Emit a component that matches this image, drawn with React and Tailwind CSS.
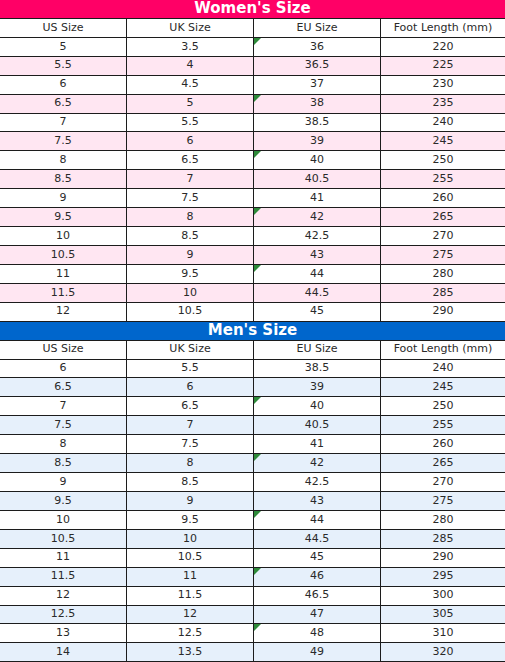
const women = [
  ["5", "3.5", "36", "220"],
  ["5.5", "4", "36.5", "225"],
  ["6", "4.5", "37", "230"],
  ["6.5", "5", "38", "235"],
  ["7", "5.5", "38.5", "240"],
  ["7.5", "6", "39", "245"],
  ["8", "6.5", "40", "250"],
  ["8.5", "7", "40.5", "255"],
  ["9", "7.5", "41", "260"],
  ["9.5", "8", "42", "265"],
  ["10", "8.5", "42.5", "270"],
  ["10.5", "9", "43", "275"],
  ["11", "9.5", "44", "280"],
  ["11.5", "10", "44.5", "285"],
  ["12", "10.5", "45", "290"],
];

const men = [
  ["6", "5.5", "38.5", "240"],
  ["6.5", "6", "39", "245"],
  ["7", "6.5", "40", "250"],
  ["7.5", "7", "40.5", "255"],
  ["8", "7.5", "41", "260"],
  ["8.5", "8", "42", "265"],
  ["9", "8.5", "42.5", "270"],
  ["9.5", "9", "43", "275"],
  ["10", "9.5", "44", "280"],
  ["10.5", "10", "44.5", "285"],
  ["11", "10.5", "45", "290"],
  ["11.5", "11", "46", "295"],
  ["12", "11.5", "46.5", "300"],
  ["12.5", "12", "47", "305"],
  ["13", "12.5", "48", "310"],
  ["14", "13.5", "49", "320"],
];

const headers = ["US Size", "UK Size", "EU Size", "Foot Length (mm)"];

function Row({ cells, bg, flag }) {
  return (
    <div className={`flex-1 grid grid-cols-[127px_127px_127px_1fr] border-b border-[#1c1c1c] ${bg}`}>
      {cells.map((c, i) => (
        <div
          key={i}
          className={`relative flex items-center justify-center ${i < 3 ? "border-r border-[#1c1c1c]" : ""}`}
        >
          {flag && i === 2 && (
            <svg className="absolute left-0 top-0" width="7" height="7" viewBox="0 0 7 7">
              <polygon points="0,0 7,0 0,7" fill="#2e8b3a" />
            </svg>
          )}
          {c}
        </div>
      ))}
    </div>
  );
}

function Section({ title, titleBg, stripe, rows, flagStart }) {
  return (
    <>
      <div className={`flex-1 flex items-center justify-center border-b border-[#1c1c1c] ${titleBg}`}>
        <span className="text-white font-bold text-[15px] leading-none">{title}</span>
      </div>
      <Row cells={headers} bg="bg-white" />
      {rows.map((r, i) => (
        <Row
          key={i}
          cells={r}
          bg={i % 2 === 1 ? stripe : "bg-white"}
          flag={i % 3 === flagStart}
        />
      ))}
    </>
  );
}

export default function App() {
  return (
    <div
      className="w-[505px] h-[662px] flex flex-col bg-white text-[#2a2a2a] text-[11px]"
      style={{ fontFamily: '"DejaVu Sans", Verdana, sans-serif' }}
    >
      <Section title="Women's Size" titleBg="bg-[#ff0066]" stripe="bg-[#ffe6f2]" rows={women} flagStart={0} />
      <Section title="Men's Size" titleBg="bg-[#0066cc]" stripe="bg-[#e6f0fb]" rows={men} flagStart={2} />
    </div>
  );
}
